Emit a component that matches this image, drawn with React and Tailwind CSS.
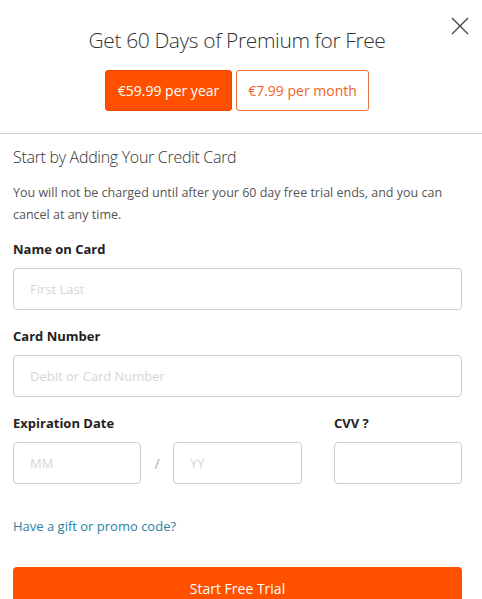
import React, { useState } from 'react';

const font = { fontFamily: '"Open Sans", "Noto Sans", Arial, sans-serif' };

export default function App() {
  const [plan, setPlan] = useState('year');

  return (
    <div className="w-[482px] h-[599px] overflow-hidden bg-white relative" style={font}>
      <button className="absolute right-[12px] top-[16px] w-[20px] h-[20px] text-[#444]">
        <svg viewBox="0 0 20 20" className="w-[20px] h-[20px]" fill="none" stroke="currentColor" strokeWidth="1.3">
          <path d="M2 2l16 16M18 2L2 18" />
        </svg>
      </button>

      <div className="flex flex-col items-center pt-[26px] pb-[22px] pr-[8px] border-b border-[#cfcfcf]">
        <h1 className="text-[21px] font-light tracking-[-0.4px] text-[#333] leading-[29px]">
          Get 60 Days of Premium for Free
        </h1>
        <div className="flex gap-[4px] mt-[15px]">
          <button
            onClick={() => setPlan('year')}
            className={`w-[127px] h-[41px] rounded-[3px] text-[14px] border ${plan === 'year' ? 'bg-[#ff5000] border-[#e84800] text-white' : 'bg-white border-[#f0703a] text-[#f0642a]'}`}
          >
            €59.99 per year
          </button>
          <button
            onClick={() => setPlan('month')}
            className={`w-[133px] h-[41px] rounded-[3px] text-[14px] border ${plan === 'month' ? 'bg-[#ff5000] border-[#e84800] text-white' : 'bg-white border-[#f0703a] text-[#f0642a]'}`}
          >
            €7.99 per month
          </button>
        </div>
      </div>

      <div className="pl-[13px] pr-[20px] pt-[12px]">
        <h2 className="text-[16px] font-light text-[#333] tracking-[-0.3px] leading-[22px]">Start by Adding Your Credit Card</h2>
        <p className="mt-[14px] text-[12.5px] leading-[22px] text-[#555]">
          You will not be charged until after your 60 day free trial ends, and you can cancel at any time.
        </p>

        <label className="block mt-[14px] text-[13px] font-bold text-[#222] leading-[18px]">Name on Card</label>
        <input
          placeholder="First Last"
          className="mt-[10px] w-full h-[42px] px-[16px] rounded-[4px] border border-[#cccccc] text-[13px] placeholder:text-[#d6d6d6] outline-none"
        />

        <label className="block mt-[17px] text-[13px] font-bold text-[#222] leading-[18px]">Card Number</label>
        <input
          placeholder="Debit or Card Number"
          className="mt-[10px] w-full h-[42px] px-[16px] rounded-[4px] border border-[#cccccc] text-[13px] placeholder:text-[#d6d6d6] outline-none"
        />

        <div className="flex mt-[17px]">
          <div className="w-[289px]">
            <label className="block text-[13px] font-bold text-[#222] leading-[18px]">Expiration Date</label>
            <div className="flex items-center mt-[10px]">
              <input
                placeholder="MM"
                className="w-[128px] h-[42px] px-[16px] rounded-[4px] border border-[#cccccc] text-[13px] placeholder:text-[#d6d6d6] outline-none"
              />
              <span className="w-[32px] text-center text-[14px] text-[#aaa]">/</span>
              <input
                placeholder="YY"
                className="w-[129px] h-[42px] px-[16px] rounded-[4px] border border-[#cccccc] text-[13px] placeholder:text-[#d6d6d6] outline-none"
              />
            </div>
          </div>
          <div className="ml-[32px]">
            <label className="block text-[13px] font-bold text-[#222] leading-[18px]">CVV ?</label>
            <input
              className="mt-[10px] w-[128px] h-[42px] px-[16px] rounded-[4px] border border-[#cccccc] text-[13px] outline-none"
            />
          </div>
        </div>

        <a href="#" className="block mt-[33px] text-[13px] text-[#2b7fa3] leading-[18px]">Have a gift or promo code?</a>

        <button className="mt-[32px] w-full h-[42px] rounded-[4px] bg-[#ff5000] text-white text-[14px]">
          Start Free Trial
        </button>
      </div>
    </div>
  );
}
